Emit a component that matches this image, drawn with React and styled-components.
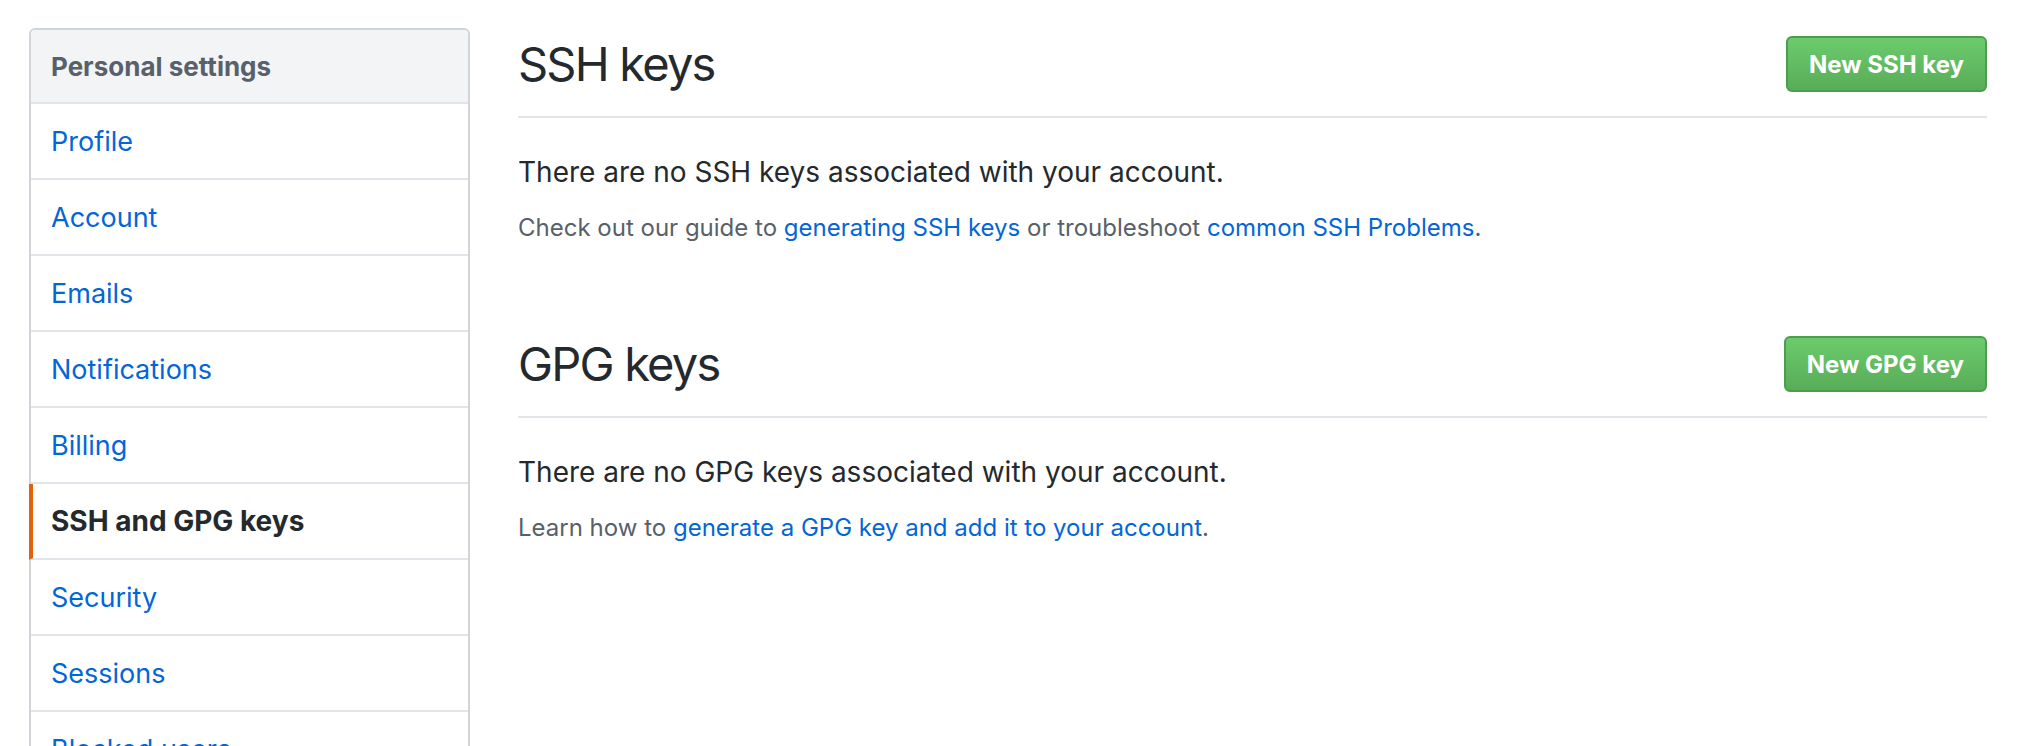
import React from "react";
import styled, { createGlobalStyle } from "styled-components";

const GlobalStyle = createGlobalStyle`
  html, body {
    margin: 0;
    padding: 0;
    background: #ffffff;
    overflow: hidden;
  }
  body {
    font-family: Inter, "Liberation Sans", Arial, sans-serif;
    color: #24292e;
  }
`;

const Page = styled.div`
  display: flex;
  align-items: flex-start;
  gap: 48px;
  padding: 28px 51px 0 29px;
  height: 746px;
  box-sizing: border-box;
`;

const Sidebar = styled.nav`
  flex: 0 0 441px;
  box-sizing: border-box;
  border: 2px solid #d1d5da;
  border-radius: 6px;
  background: #fff;
`;

const SidebarHeader = styled.div`
  display: flex;
  align-items: center;
  height: 72px;
  padding: 0 20px;
  background: #f3f4f6;
  border-bottom: 2px solid #e1e4e8;
  border-radius: 5px 5px 0 0;
  font-size: 26px;
  font-weight: 700;
  color: #586069;
`;

const NavItem = styled.a`
  display: flex;
  align-items: center;
  height: 74px;
  padding: 0 20px;
  border-bottom: 2px solid #e1e4e8;
  font-size: ${(p) => (p.$selected ? 28 : 27)}px;
  text-decoration: none;
  color: ${(p) => (p.$selected ? "#24292e" : "#0366d6")};
  font-weight: ${(p) => (p.$selected ? 700 : 400)};
  ${(p) =>
    p.$selected &&
    `
    margin-left: -2px;
    padding-left: 18px;
    border-left: 4px solid #e36209;
  `}
`;

const Main = styled.main`
  flex: 1;
  min-width: 0;
`;

const Section = styled.section`
  & + & {
    margin-top: 82px;
  }
`;

const Subhead = styled.div`
  display: flex;
  align-items: center;
  justify-content: space-between;
  padding: 8px 0 24px;
  border-bottom: 2px solid #e1e4e8;
`;

const Heading = styled.h2`
  margin: 0;
  font-size: 47px;
  font-weight: 400;
  letter-spacing: -1.8px;
  line-height: 56px;
  color: #24292e;
`;

const GreenButton = styled.button`
  display: inline-flex;
  align-items: center;
  height: 56px;
  box-sizing: border-box;
  padding: 0 21px;
  border: 2px solid #4c9d4e;
  border-radius: 6px;
  background: linear-gradient(180deg, #6ccb6c 0%, #58ad58 100%);
  color: #ffffff;
  font-family: Inter, "Liberation Sans", Arial, sans-serif;
  font-size: 24px;
  font-weight: 700;
  cursor: pointer;
`;

const Lead = styled.p`
  margin: 33px 0 0;
  font-size: 28px;
  line-height: 42px;
  color: #24292e;
`;

const Note = styled.p`
  margin: 17px 0 0;
  font-size: 24px;
  line-height: 36px;
  color: #586069;
`;

const Link = styled.a`
  color: #0366d6;
  text-decoration: none;
`;

const items = [
  "Profile",
  "Account",
  "Emails",
  "Notifications",
  "Billing",
  "SSH and GPG keys",
  "Security",
  "Sessions",
  "Blocked users",
  "Repositories",
];

export default function App() {
  return (
    <>
      <GlobalStyle />
      <Page>
        <Sidebar>
          <SidebarHeader>Personal settings</SidebarHeader>
          {items.map((it) => (
            <NavItem key={it} href="#" $selected={it === "SSH and GPG keys"}>
              {it}
            </NavItem>
          ))}
        </Sidebar>
        <Main>
          <Section>
            <Subhead>
              <Heading>SSH keys</Heading>
              <GreenButton>New SSH key</GreenButton>
            </Subhead>
            <Lead>There are no SSH keys associated with your account.</Lead>
            <Note>
              Check out our guide to <Link href="#">generating SSH keys</Link> or troubleshoot{" "}
              <Link href="#">common SSH Problems</Link>.
            </Note>
          </Section>
          <Section>
            <Subhead>
              <Heading>GPG keys</Heading>
              <GreenButton>New GPG key</GreenButton>
            </Subhead>
            <Lead>There are no GPG keys associated with your account.</Lead>
            <Note>
              Learn how to <Link href="#">generate a GPG key and add it to your account</Link>.
            </Note>
          </Section>
        </Main>
      </Page>
    </>
  );
}
